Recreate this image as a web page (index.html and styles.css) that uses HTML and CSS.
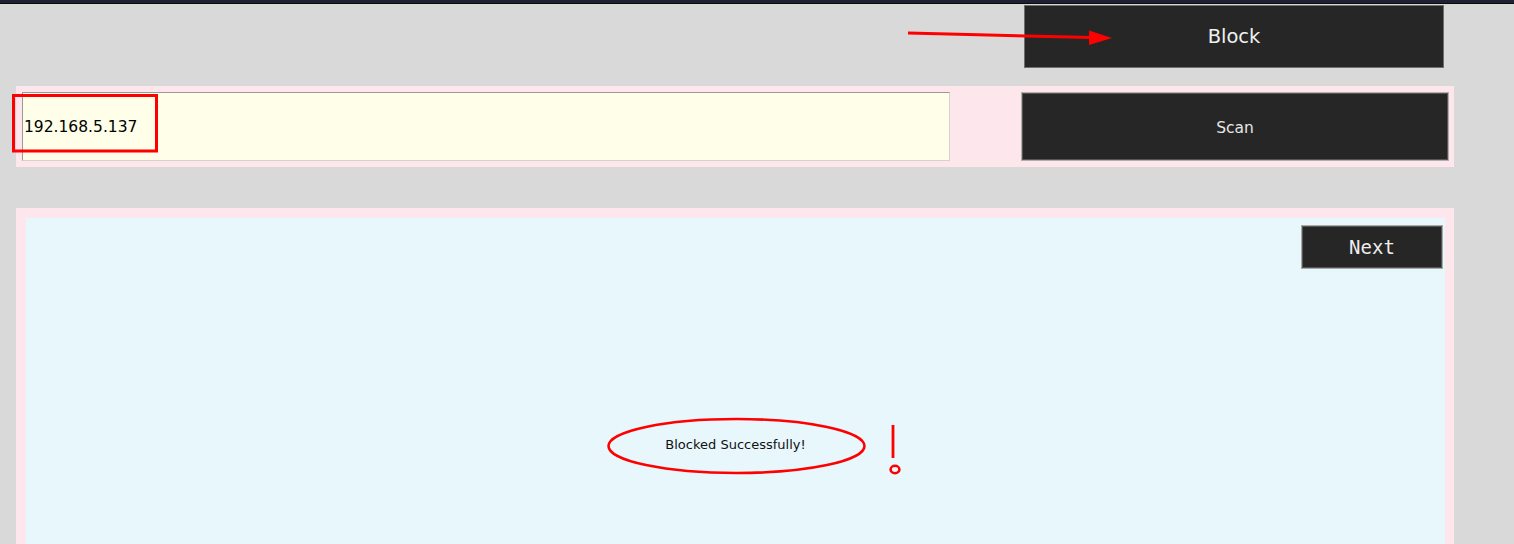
FILE: index.html
```html
<!DOCTYPE html>
<html>
<head>
<meta charset="utf-8">
<link rel="stylesheet" href="styles.css">
</head>
<body>
<div class="topstrip"></div>
<div class="header">
  <button class="btn block-btn">Block</button>
</div>
<div class="panel scan-panel">
  <div class="ip-input">192.168.5.137</div>
  <button class="btn scan-btn">Scan</button>
</div>
<div class="panel result-panel">
  <div class="result-inner">
    <div class="result-top">
      <button class="btn next-btn">Next</button>
    </div>
    <div class="message">Blocked Successfully!</div>
  </div>
</div>
<svg class="annotations" width="1514" height="544" viewBox="0 0 1514 544">
  <line x1="908" y1="33" x2="1092" y2="37.6" stroke="#ff0000" stroke-width="3"/>
  <polygon points="1089,30.5 1112,38 1089,45" fill="#ff0000"/>
  <rect x="13.5" y="95.5" width="143" height="55.5" fill="none" stroke="#ff0000" stroke-width="3"/>
  <ellipse cx="736.5" cy="446" rx="128" ry="27" fill="none" stroke="#ff0000" stroke-width="2.6"/>
  <line x1="893" y1="425" x2="893" y2="458" stroke="#ff0000" stroke-width="2.8"/>
  <ellipse cx="895" cy="469.5" rx="4.4" ry="3.7" fill="none" stroke="#ff0000" stroke-width="2.6"/>
</svg>
</body>
</html>
```

FILE: styles.css
```css
html, body {
  margin: 0;
  padding: 0;
}
body {
  background: #d9d9d9;
  width: 1514px;
  height: 544px;
  overflow: hidden;
  position: relative;
  font-family: "DejaVu Sans", sans-serif;
}
.topstrip {
  height: 3px;
  background: #1f2130;
  border-bottom: 1px solid #0c0c10;
}
.header {
  display: flex;
  justify-content: flex-end;
  padding: 1px 70px 0 0;
  height: 82px;
  box-sizing: border-box;
}
.btn {
  background: #262626;
  color: #f0f0f0;
  font-family: "DejaVu Sans", sans-serif;
  padding: 0;
  margin: 0;
  cursor: pointer;
}
.block-btn {
  width: 420px;
  height: 63px;
  border: 1px solid #6e6e6e;
  font-size: 19.5px;
}
.panel {
  background: #fde6ec;
  margin-left: 16px;
  width: 1438px;
  box-sizing: border-box;
}
.scan-panel {
  height: 81px;
  padding: 6px 5px 6px 6px;
  display: flex;
  justify-content: space-between;
  align-items: flex-start;
}
.ip-input {
  width: 928px;
  height: 69px;
  box-sizing: border-box;
  background: #fefee9;
  border-style: solid;
  border-width: 1px;
  border-color: #9a9a9a #d4d4cc #d4d4cc #9a9a9a;
  font-size: 15.5px;
  color: #000;
  display: flex;
  align-items: center;
  padding-left: 1px;
  padding-top: 1px;
}
.scan-btn {
  width: 428px;
  height: 69px;
  border: 1px solid #b0b0b0;
  box-shadow: inset 0 0 0 1px #555;
  font-size: 15.5px;
  color: #e6e6e6;
  padding-top: 2px;
}
.result-panel {
  margin-top: 41px;
  height: 336px;
  padding: 10px 9px 0 10px;
}
.result-inner {
  background: #e8f7fc;
  height: 100%;
  padding: 7px 2px 0 0;
  box-sizing: border-box;
}
.result-top {
  display: flex;
  justify-content: flex-end;
}
.next-btn {
  width: 142px;
  height: 44px;
  border: 1px solid #a8a8a8;
  box-shadow: inset 0 0 0 1px #555;
  font-family: "DejaVu Sans Mono", monospace;
  font-size: 19px;
  color: #eeeeee;
}
.message {
  margin-top: 168px;
  text-align: center;
  font-size: 13px;
  line-height: 16px;
  color: #111;
  padding-left: 2px;
}
.annotations {
  position: absolute;
  top: 0;
  left: 0;
  pointer-events: none;
}
```
